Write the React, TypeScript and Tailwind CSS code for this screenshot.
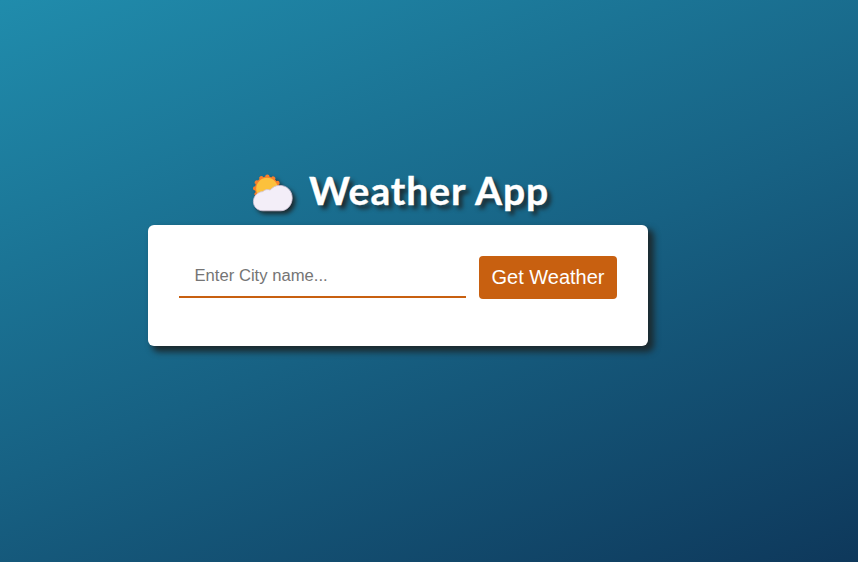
function SunBehindCloud() {
  return (
    <svg viewBox="0 0 48 46" className="h-[46px] w-12 shrink-0 overflow-visible drop-shadow-[3px_3px_2px_#1c2b30]" aria-hidden="true">
      <circle cx="19" cy="18.6" r="12" fill="#f8802c" />
      <circle cx="19" cy="18.6" r="11.8" fill="none" stroke="#f8802c" strokeWidth="4.4" strokeLinecap="round" strokeDasharray="0.01 6.168" />
      <circle cx="19" cy="18.6" r="10.8" fill="#fcc13c" />
      <path
        d="M15 40.8C9.6 40.8 5.4 36.9 5.4 31.6C5.4 26.2 9.6 22 14.8 21.6C17 19.4 20 19.1 22.2 20.1C24.4 17 28 15.4 31.7 15.4C38.9 15.4 44.2 20.7 44.2 27.9C44.2 35.2 39 40.8 32.5 40.8Z"
        fill="#f3eef8"
        stroke="#cfc3d8"
        strokeWidth=".8"
      />
    </svg>
  );
}

export default function App() {
  return (
    <main className="flex h-screen w-screen flex-col items-start bg-[linear-gradient(158deg,#208cac_0%,#176183_53%,#0e385b_100%)] pl-[148px] pt-[161px]">
      <h1 className="flex h-16 w-[500px] items-center pl-[100px] font-['Lato',sans-serif] text-[39px] font-bold text-white">
        <SunBehindCloud />
        <span className="ml-[13px] whitespace-nowrap pb-[5px] tracking-[0.97px] [-webkit-text-stroke:0.4px_white] [text-shadow:4px_4px_4px_#1c2b30]">Weather App</span>
      </h1>
      <section className="flex h-[121px] w-[500px] items-start rounded-md bg-white px-[31px] pt-[31px] font-['Liberation_Sans',Arial,sans-serif] shadow-[5px_5px_6px_1px_#1c2b30]">
        <input
          type="text"
          aria-label="City name"
          placeholder="Enter City name..."
          className="h-[42px] w-[287px] border-b-2 border-[#c86010] bg-white pl-[15.5px] pr-[15px] pb-px text-[16.65px] outline-none placeholder:text-[#757575]"
        />
        <button type="button" className="ml-[13px] h-[43px] w-[138px] whitespace-nowrap rounded bg-[#c86010] pb-[2px] text-[20px] text-white">
          Get Weather
        </button>
      </section>
    </main>
  );
}
